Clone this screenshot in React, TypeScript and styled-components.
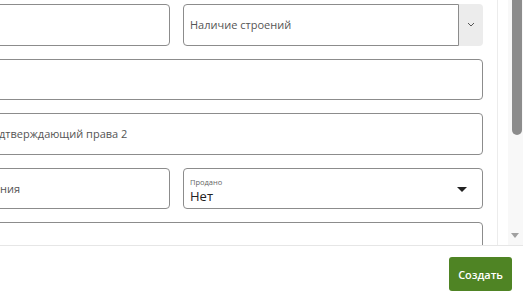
import React from "react";
import styled, { createGlobalStyle } from "styled-components";

const GlobalStyle = createGlobalStyle`
  html, body {
    margin: 0;
    padding: 0;
    background: #ffffff;
  }
  body {
    font-family: "Open Sans", "Noto Sans", sans-serif;
  }
`;

const borderColor = "#8c8c8c";
const fieldHeight = "41.5px";

const Root = styled.div`
  width: 523px;
  height: 299px;
  display: flex;
  flex-direction: column;
  overflow: hidden;
  background: #fff;
`;

const Body = styled.div`
  height: 245px;
  display: flex;
`;

const Viewport = styled.div`
  width: 497px;
  height: 100%;
  overflow: hidden;
  border-right: 1px solid #ececec;
  flex-shrink: 0;
`;

// the form is wider than the dialog and scrolled sideways
const Form = styled.div`
  width: 613px;
  margin-left: -130px;
  padding-top: 4px;
  display: grid;
  grid-template-columns: 300px 300px;
  grid-auto-rows: ${fieldHeight};
  column-gap: 13px;
  row-gap: 13px;
`;

const Field = styled.div<{ wide?: boolean; indent?: number }>`
  grid-column: ${(p) => (p.wide ? "1 / span 2" : "auto")};
  box-sizing: border-box;
  border: 1px solid ${borderColor};
  border-radius: 4px;
  padding: 0 6px 0 ${(p) => p.indent ?? 6}px;
  display: flex;
  align-items: center;
  font-size: 11px;
  color: #555;
  white-space: nowrap;
  overflow: hidden;
`;

const Group = styled.div`
  display: flex;
  height: 100%;
`;

const GroupBox = styled(Field)`
  flex: 1;
  border-radius: 4px 0 0 4px;
`;

const Addon = styled.div`
  width: 24px;
  background: #ececec;
  border-radius: 0 4px 4px 0;
  display: flex;
  align-items: center;
  justify-content: center;
`;

const FloatSelect = styled(Field)`
  position: relative;
  flex-direction: column;
  align-items: flex-start;
  justify-content: flex-start;
  padding: 8px 6px 0;
`;

const FloatLabel = styled.span`
  font-size: 7.5px;
  line-height: 10px;
  color: #666;
`;

const FloatValue = styled.span`
  font-size: 13px;
  line-height: 18px;
  color: #222;
`;

const Caret = styled.span`
  position: absolute;
  right: 15px;
  top: 18px;
  width: 0;
  height: 0;
  border-left: 5px solid transparent;
  border-right: 5px solid transparent;
  border-top: 5px solid #222;
`;

const Gap = styled.div`
  width: 10px;
`;

const Track = styled.div`
  width: 15px;
  height: 100%;
  background: #f8f8f8;
  display: flex;
  flex-direction: column;
  align-items: flex-end;
  justify-content: space-between;
`;

const Thumb = styled.div`
  width: 10px;
  height: 135px;
  margin-right: 1px;
  background: #8c8c8c;
  border-radius: 0 0 5px 5px;
`;

const DownArrow = styled.div`
  margin: 0 4px 7px 0;
  width: 0;
  height: 0;
  border-left: 4px solid transparent;
  border-right: 4px solid transparent;
  border-top: 5px solid #a0a0a0;
`;

const Footer = styled.div`
  flex: 1;
  border-top: 1px solid #e6e6e6;
  display: flex;
  align-items: center;
  justify-content: flex-end;
  padding: 3px 11px 0 0;
`;

const Button = styled.button`
  height: 34px;
  padding: 0 9px;
  border: none;
  border-radius: 3px;
  background: #4f8424;
  color: #fff;
  font-family: "Open Sans", sans-serif;
  font-weight: 600;
  font-size: 11px;
  cursor: pointer;
`;

function Chevron() {
  return (
    <svg width="8" height="5" viewBox="0 0 8 5" fill="none">
      <path d="M1 1l3 3 3-3" stroke="#555" strokeWidth="1" />
    </svg>
  );
}

export default function App() {
  return (
    <>
      <GlobalStyle />
      <Root>
        <Body>
          <Viewport>
            <Form>
              <Field />
              <Group>
                <GroupBox>Наличие строений</GroupBox>
                <Addon>
                  <Chevron />
                </Addon>
              </Group>
              <Field wide />
              <Field wide indent={128}>
                дтверждающий права 2
              </Field>
              <Field indent={129}>ния</Field>
              <FloatSelect>
                <FloatLabel>Продано</FloatLabel>
                <FloatValue>Нет</FloatValue>
                <Caret />
              </FloatSelect>
              <Field wide />
            </Form>
          </Viewport>
          <Gap />
          <Track>
            <Thumb />
            <DownArrow />
          </Track>
        </Body>
        <Footer>
          <Button>Создать</Button>
        </Footer>
      </Root>
    </>
  );
}
